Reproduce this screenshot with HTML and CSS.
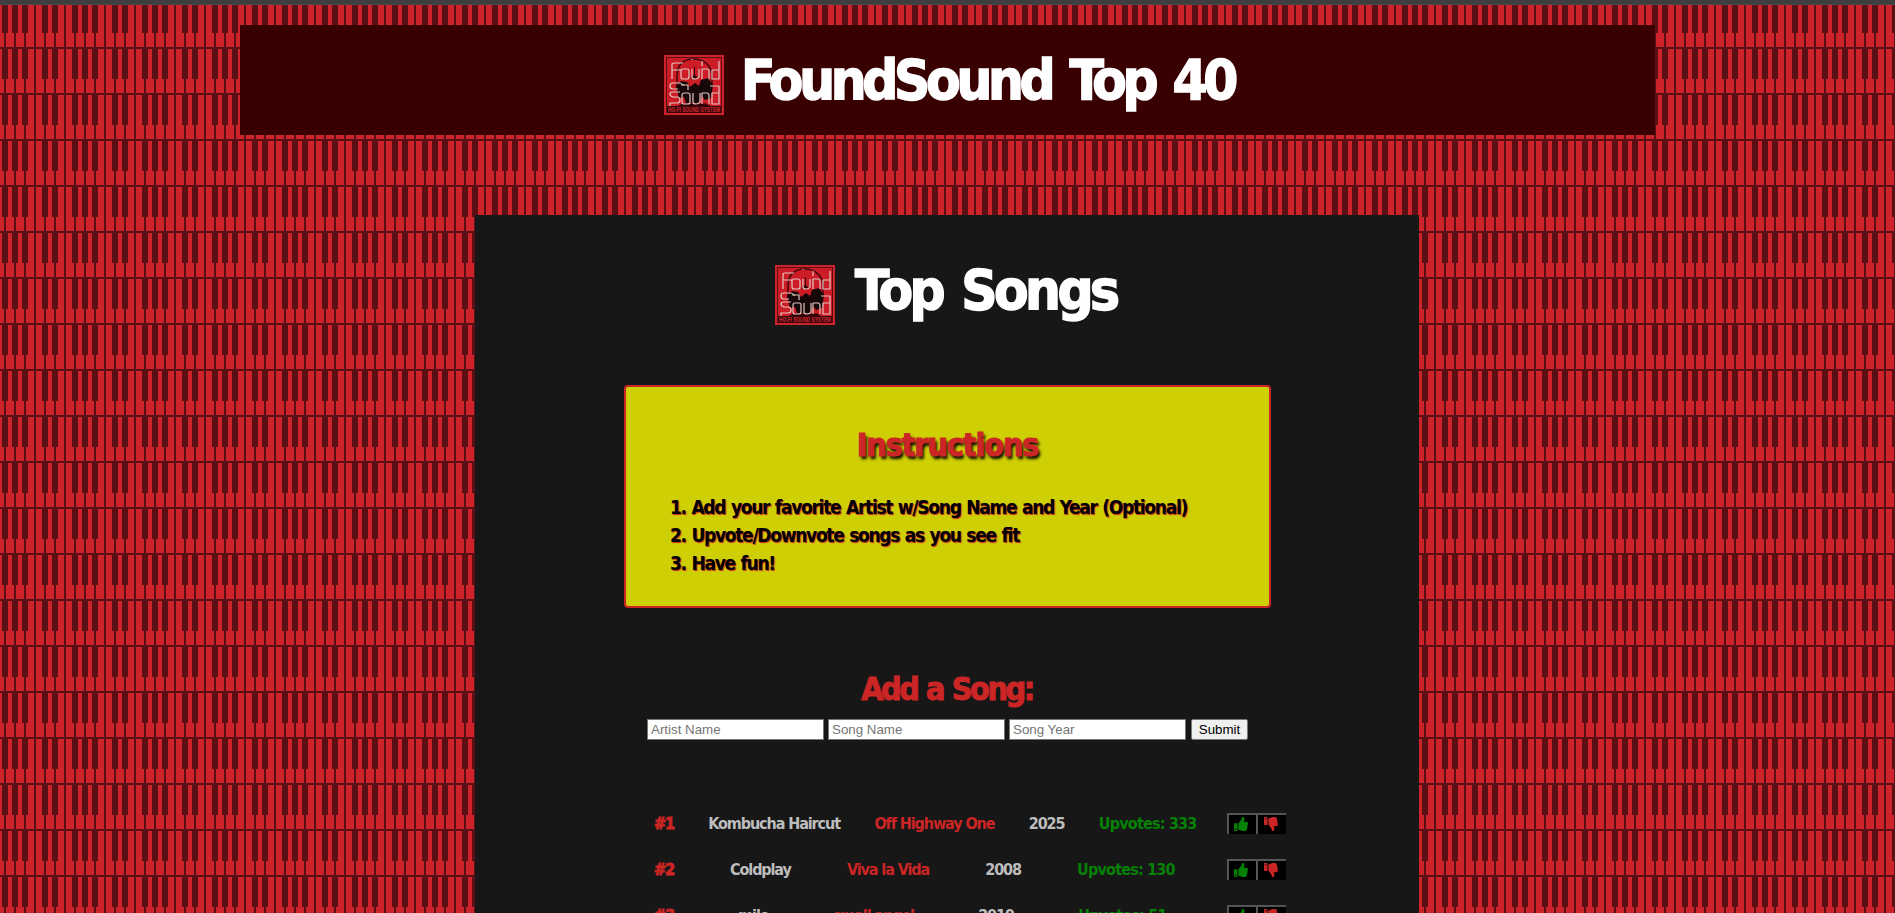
FILE: index.html
```html
<!DOCTYPE html>
<html lang="en">
<head>
<meta charset="utf-8">
<title>FoundSound Top 40</title>
<link rel="stylesheet" href="styles.css">
</head>
<body>
<svg class="defs" width="0" height="0">
  <symbol id="logo" viewBox="0 0 60 60">
    <rect width="60" height="60" fill="#cf232b"/>
    <rect x="2.5" y="2.5" width="55" height="55" fill="#cc1c26" stroke="#5b1016"/>
    <path d="M13 34V22C13 8 21 4 30 4s18 6 18 17v10" fill="none" stroke="#47070b" stroke-width="1.5"/>
    <path d="M12 31l5-5 6 1 3 5 5-4 4 3 2-6 7-2 5 7-2 13-6 2-3-4-3 7H22l-2-6-5 1z" fill="#160709"/>
    <path d="M30.500 12v10M27 24q3-7 7 0M18 49h24l5 3H13z" stroke="#330308" fill="#330308"/>
    <g fill="none" stroke="#e2c5c1" stroke-width="1.2" stroke-linejoin="round">
      <path d="M19 8h-9q-2 0-2 2v14M8 15h9"/>
      <rect x="17" y="14" width="8" height="10" rx="2"/>
      <path d="M28 5v-1M28 14v8q0 2 3 2t4-2v-8M38 24V14h5q2 0 2 2v8M55 6v18h-7v-9h7M38 6v5"/>
      <path d="M20 30h-2q0-2-3-2H9q-3 0-3 3t3 3h5M16 37h-7q-3 0-3 2t3 3h4q3 0 3 3t-3 3H6v5"/>
      <rect x="18" y="38" width="8" height="11" rx="2"/>
      <path d="M18 30h6v5M29 38v9q0 2 3 2t4-2v-9M38 49V38h5q2 0 2 3v8M55 31v18h-7V38h7M46 31h9"/>
    </g>
    <rect x="3" y="51" width="54" height="7" fill="#36080c"/>
    <text x="30" y="57" text-anchor="middle" textLength="52" lengthAdjust="spacingAndGlyphs" font-family="Liberation Sans" font-weight="bold" font-size="7" fill="#cf232b">HO-FI SOUND SYSTEM</text>
  </symbol>
  <symbol id="up" viewBox="0 0 512 512"><path d="M104 224H24c-13 0-24 11-24 24v240c0 13 11 24 24 24h80c13 0 24-11 24-24V248c0-13-11-24-24-24zM64 472a24 24 0 1 1 0-48 24 24 0 0 1 0 48zM384 81c0 43-26 67-33 95h101c33 0 60 28 60 58 0 18-8 37-20 49 10 24 9 57-9 81 9 26 0 58-17 75 5 19 2 34-6 47-21 29-71 26-114 26h-3c-48 0-87-18-119-32-16-7-36-15-52-16a12 12 0 0 1-12-12V238c0-3 1-6 4-8 39-39 56-80 89-113 15-15 20-37 26-59C283 39 293 0 315 0c26 0 69 9 69 81z"/></symbol>
</svg>
<header class="banner">
  <svg class="logo"><use href="#logo"/></svg>
  <h1 class="title title-site">FoundSound Top 40</h1>
</header>
<main class="panel">
  <div class="heading">
    <svg class="logo"><use href="#logo"/></svg>
    <h2 class="title title-songs">Top Songs</h2>
  </div>
  <section class="instructions">
    <h3 class="subhead shadowed">Instructions</h3>
    <div class="steps">
      <p class="step">1. Add your favorite Artist w/Song Name and Year (Optional)</p>
      <p class="step">2. Upvote/Downvote songs as you see fit</p>
      <p class="step">3. Have fun!</p>
    </div>
  </section>
  <h3 class="subhead add">Add a Song:</h3>
  <form class="form">
    <input placeholder="Artist Name"><input placeholder="Song Name"><input placeholder="Song Year"><button type="button" class="submit">Submit</button>
  </form>
  <div class="songs">
    <div class="song"><b class="rank">#1</b><span>Kombucha Haircut</span><span class="red">Off Highway One</span><span>2025</span><span class="green">Upvotes: 333</span><div class="votes"><button class="vote"><svg><use href="#up"/></svg></button><button class="vote down"><svg><use href="#up"/></svg></button></div></div>
    <div class="song"><b class="rank">#2</b><span>Coldplay</span><span class="red">Viva la Vida</span><span>2008</span><span class="green">Upvotes: 130</span><div class="votes"><button class="vote"><svg><use href="#up"/></svg></button><button class="vote down"><svg><use href="#up"/></svg></button></div></div>
    <div class="song"><b class="rank">#3</b><span>milo</span><span class="red">small angel</span><span>2019</span><span class="green">Upvotes: 51</span><div class="votes"><button class="vote"><svg><use href="#up"/></svg></button><button class="vote down"><svg><use href="#up"/></svg></button></div></div>
  </div>
</main>
</body>
</html>
```

FILE: styles.css
```css
* { box-sizing: border-box; }
html { height: 100%; overflow: hidden; }
body {
  --dark: #5b1016;
  margin: 0;
  height: 913px;
  overflow: hidden;
  border-top: 4px solid #3e3e3e;
  box-shadow: inset 0 1px #4b4b4b;
  font-family: "DejaVu Sans Condensed", "DejaVu Sans", sans-serif;
  font-stretch: condensed;
  font-weight: bold;
  background-color: #cf232b;
  /* piano keys: row gap, octave gaps, key gaps, white key fronts, black keys */
  background-image:
    linear-gradient(var(--dark) 2px, transparent 2px),
    linear-gradient(90deg, transparent 34px, var(--dark) 34px 36px, transparent 36px 64px, var(--dark) 64px 66px, transparent 66px),
    linear-gradient(90deg, transparent 4px, var(--dark) 4px 6px, transparent 6px),
    linear-gradient(transparent 32px, #cf232b 32px),
    linear-gradient(90deg, transparent 2px, var(--dark) 2px 8px, transparent 8px 12px, var(--dark) 12px 18px, transparent 18px 22px, var(--dark) 22px 28px, transparent 28px 42px, var(--dark) 42px 48px, transparent 48px 52px, var(--dark) 52px 58px, transparent 58px);
  background-size: 100% 46px, 70px 46px, 10px 46px, 100% 46px, 70px 46px;
  background-position: 0 1px;
}
.defs { display: none; }
.banner {
  width: 1415px;
  height: 110px;
  margin: 21px 0 0 240px;
  padding: 30px 0 0 424px;
  display: flex;
  gap: 17px;
  background: #380000;
}
.logo { width: 60px; height: 60px; flex: none; }
.title {
  margin: 0;
  font-size: 56px;
  line-height: 50px;
  color: #fff;
  white-space: nowrap;
  -webkit-text-stroke: 1.5px #fff;
}
.title-site { letter-spacing: -4.3px; word-spacing: 5px; }
.title-songs { letter-spacing: -3.5px; word-spacing: 5px; }
.panel {
  width: 944px;
  height: 698px;
  overflow: hidden;
  margin: 80px 0 0 475px;
  padding-top: 50px;
  background: #171717;
}
.heading { display: flex; gap: 20px; padding-left: 300px; }
.instructions {
  width: 647px;
  height: 223px;
  margin: 60px 0 0 149px;
  padding: 38px 0 0 45px;
  border: 2px solid #cb2525;
  border-radius: 4px;
  background: #cfcf05;
}
.subhead {
  margin: 0;
  font-size: 32px;
  line-height: 40px;
  letter-spacing: -2.4px;
  color: #cb2525;
  text-align: center;
  -webkit-text-stroke: 1px #cb2525;
}
.shadowed {
  margin-left: -45px;
  letter-spacing: -1.1px;
  text-shadow: 2px 3px 3px #000;
}
.steps { margin-top: 28px; }
.step {
  margin: 0 0 0 -1px;
  font-size: 19px;
  line-height: 28px;
  letter-spacing: -1.3px;
  word-spacing: 1px;
  color: #000;
  text-shadow: 1px 1px 1px #cb2525;
  white-space: nowrap;
}
.add { margin-top: 61px; word-spacing: 1px; }
.form { display: flex; gap: 4px; margin: 10px 0 0 172px; }
.form input {
  width: 177px;
  height: 21px;
  padding: 1px 3px;
  border: 1px solid #767676;
  font: 13.333px "Liberation Sans", sans-serif;
}
.form input::placeholder { color: #757575; opacity: 1; }
.submit {
  width: 57px;
  height: 21px;
  margin-left: 1px;
  padding: 0;
  border: 1px solid #767676;
  border-radius: 2px;
  background: #efefef;
  color: #000;
  font: 13.333px "Liberation Sans", sans-serif;
}
.songs { width: 632px; margin: 73px 0 0 179px; }
.song {
  display: flex;
  justify-content: space-between;
  height: 21px;
  margin-bottom: 25px;
  font-size: 16px;
  line-height: 22px;
  letter-spacing: -1.1px;
  color: #bdbdbd;
  white-space: nowrap;
}
.rank, .red { color: #cb2525; }
.rank { -webkit-text-stroke: 1px #cb2525; }
.green { color: #058205; letter-spacing: -0.8px; }
.votes { display: flex; margin-left: -4px; }
.vote {
  width: 30px;
  height: 21px;
  padding: 0 2px 2px 0;
  display: flex;
  align-items: center;
  justify-content: center;
  border: 0 solid #555;
  border-width: 2px 0 0 2px;
  background: #000;
}
.vote:first-child { width: 29px; }
.vote svg { width: 14px; height: 14px; fill: #058205; }
.down svg { fill: #cb2525; transform: rotate(180deg) scaleX(-1); }
```
